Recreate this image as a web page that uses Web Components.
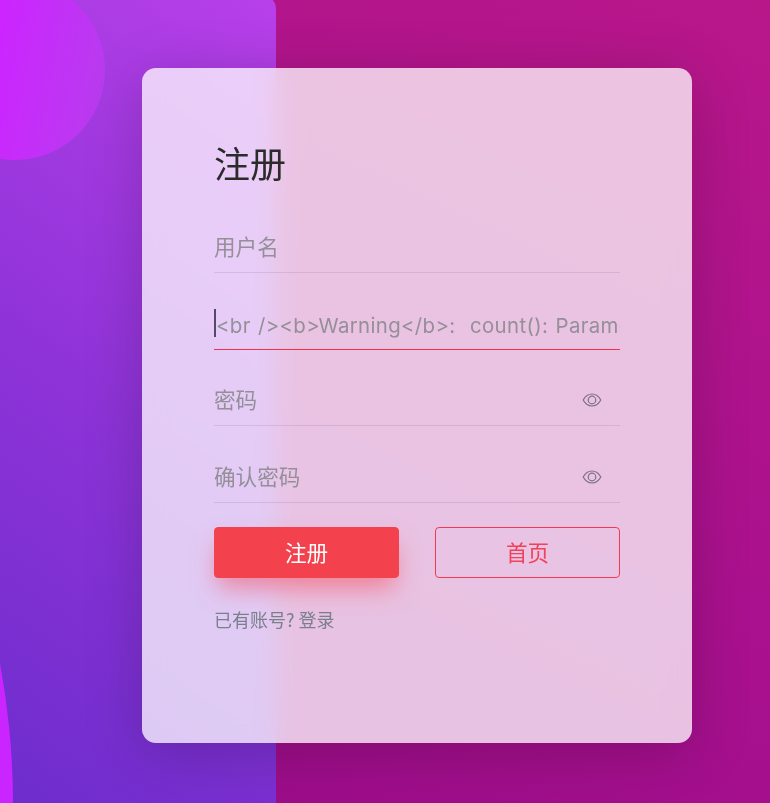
<!DOCTYPE html>
<html lang="zh"><head><meta charset="utf-8"><title>注册</title>
<style>
html,body{margin:0;height:100%;overflow:hidden}
body{font-family:"Noto Sans","Noto Sans CJK SC",sans-serif}
</style></head><body>
<reg-stage>
  <reg-card>
    <h1 slot="title">注册</h1>
    <reg-field label="用户名"></reg-field>
    <reg-field label="&lt;br /&gt;&lt;b&gt;Warning&lt;/b&gt;:  count(): Parameter must be an array" focused></reg-field>
    <reg-field label="密码" eye></reg-field>
    <reg-field label="确认密码" eye></reg-field>
    <div slot="actions"><reg-button primary>注册</reg-button><reg-button>首页</reg-button></div>
    <span slot="foot">已有账号? 登录</span>
  </reg-card>
</reg-stage>
<script>
class RegStage extends HTMLElement{constructor(){super();this.attachShadow({mode:'open'}).innerHTML=`<style>
:host{display:block;position:relative;width:770px;height:803px;overflow:hidden;box-sizing:border-box;padding:68px 78px 60px 142px;background:linear-gradient(25deg,#980c88 0%,#a8108e 40%,#b8178a 100%)}
.panel{position:absolute;left:0;top:-5px;width:276px;height:860px;border-radius:0 14px 14px 0;overflow:hidden;background:linear-gradient(35deg,#6a2ccc 0%,#8e33d8 50%,#b840ea 100%)}
.c1{position:absolute;left:-75px;top:-15px;width:180px;height:180px;border-radius:50%;background:linear-gradient(100deg,#cc25ff 40%,#b83cee 95%)}
.c2{position:absolute;left:-1547px;top:30px;width:1560px;height:1560px;border-radius:50%;background:#cb25ff}
.content{position:relative}
</style><div class="panel"><div class="c1"></div><div class="c2"></div></div><div class="content"><slot></slot></div>`}}
class RegCard extends HTMLElement{constructor(){super();this.attachShadow({mode:'open'}).innerHTML=`<style>
:host{display:flex;flex-direction:column;align-items:stretch;box-sizing:border-box;width:550px;height:675px;padding:69px 72px 0;border-radius:14px;background:rgba(255,255,255,.75);-webkit-backdrop-filter:blur(12px);backdrop-filter:blur(12px);box-shadow:0 10px 60px rgba(0,0,0,.2)}
::slotted(h1){margin:0;font:400 36px/50px "Noto Sans CJK SC",sans-serif;color:#2b2b2b;height:50px}
.fields{display:flex;flex-direction:column;margin-top:9.5px}
::slotted([slot=actions]){display:flex;justify-content:space-between;margin-top:24px}
::slotted([slot=foot]){margin-top:26px;font:400 18px/30px "Noto Sans CJK SC",sans-serif;color:#7b7f8c}
</style><slot name="title"></slot><div class="fields"><slot></slot></div><slot name="actions"></slot><slot name="foot"></slot>`}}
class RegField extends HTMLElement{constructor(){super();const r=this.attachShadow({mode:'open'});
const eye=this.hasAttribute('eye')?`<svg viewBox="0 0 20 14" width="20" height="14" fill="none" stroke="#7d6f8a" stroke-width="1.2"><path d="M1.2 7C3.400 3 6.400 1 10 1S16.600 3 18.800 7C16.600 11 13.600 13 10 13S3.400 11 1.200 7Z"/><circle cx="10" cy="7" r="3.800"/></svg>`:'';
r.innerHTML=`<style>
:host{display:flex;align-items:center;box-sizing:border-box;height:76.6px;padding-top:26px;border-bottom:1px solid rgba(120,90,130,.17);position:relative;font:400 21.6px/32px "Noto Sans CJK SC",sans-serif;color:#948f99}
:host([focused]){border-bottom-color:#f6304a;font:400 20.4px/32px Inter,"Noto Sans CJK SC",sans-serif;letter-spacing:.35px;word-spacing:1.2px}
.t{flex:1;white-space:pre;overflow:hidden;min-width:0;padding-bottom:2px}
:host([focused]) .t{padding:4px 0 0 2px}
.caret{position:absolute;left:0;bottom:12px;width:2px;height:28px;background:#55486a}
svg{flex:none;margin-right:18px}
</style>${this.hasAttribute('focused')?'<i class="caret"></i>':''}<span class="t"></span>${eye}`;
r.querySelector('.t').textContent=this.getAttribute('label');}}
class RegButton extends HTMLElement{constructor(){super();this.attachShadow({mode:'open'}).innerHTML=`<style>
:host{display:flex;align-items:center;justify-content:center;box-sizing:border-box;width:185px;height:51px;border-radius:4px;border:1px solid #f43a50;color:#f2415a;font:400 21.6px/30px "Noto Sans CJK SC",sans-serif}
:host([primary]){background:#f4414e;border-color:#f4414e;color:#fff;box-shadow:0 14px 24px -4px rgba(245,64,76,.5)}
</style><slot></slot>`}}
customElements.define('reg-stage',RegStage);
customElements.define('reg-card',RegCard);
customElements.define('reg-field',RegField);
customElements.define('reg-button',RegButton);
</script>
</body></html>
